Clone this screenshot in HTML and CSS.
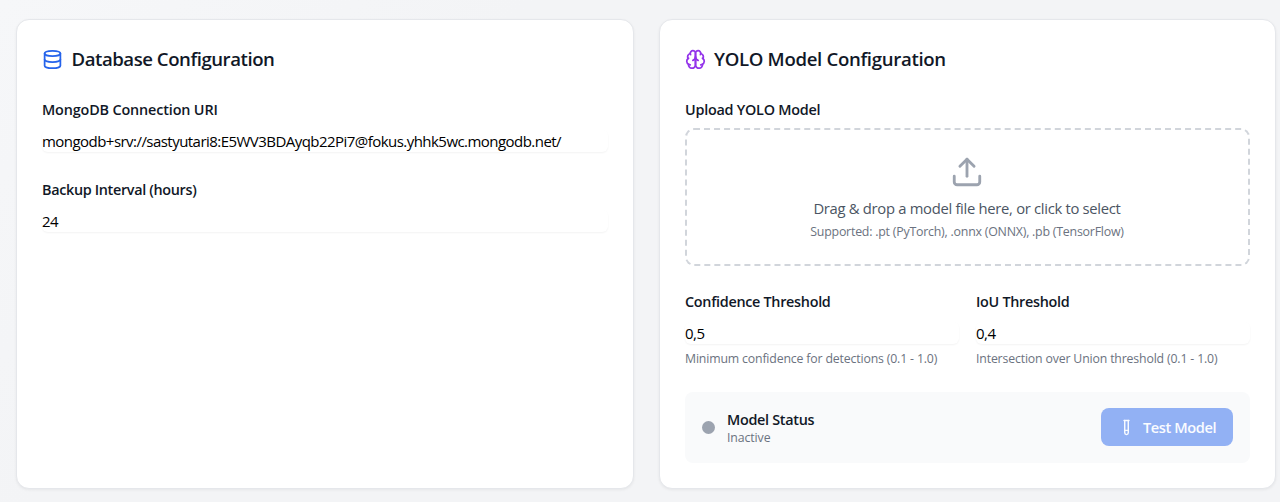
FILE: index.html
```html
<!DOCTYPE html>
<html lang="en">
<head>
<meta charset="utf-8">
<title>Configuration</title>
<link rel="stylesheet" href="styles.css">
</head>
<body>
<main class="panels">
  <section class="card">
    <h2 class="card-title">
      <svg class="icon-title icon-db" viewBox="0 0 24 24"><ellipse cx="12" cy="5" rx="9" ry="3"/><path d="M3 5v14a9 3 0 0 0 18 0V5"/><path d="M3 12a9 3 0 0 0 18 0"/></svg>
      <span class="t-db">Database Configuration</span>
    </h2>
    <div class="field">
      <label class="label"><span class="l-uri">MongoDB Connection URI</span></label>
      <div class="input"><span class="v-uri">mongodb+srv://sastyutari8:E5WV3BDAyqb22Pi7@fokus.yhhk5wc.mongodb.net/</span></div>
    </div>
    <div class="field field-next">
      <label class="label"><span class="l-backup">Backup Interval (hours)</span></label>
      <div class="input"><span class="v-num">24</span></div>
    </div>
  </section>
  <section class="card">
    <h2 class="card-title">
      <svg class="icon-title icon-brain" viewBox="0 0 24 24"><path d="M12 5a3 3 0 1 0-5.997.125 4 4 0 0 0-2.526 5.77 4 4 0 0 0 .556 6.588A4 4 0 1 0 12 18Z"/><path d="M12 5a3 3 0 1 1 5.997.125 4 4 0 0 1 2.526 5.77 4 4 0 0 1-.556 6.588A4 4 0 1 1 12 18Z"/><path d="M15 13a4.5 4.5 0 0 1-3-4 4.5 4.5 0 0 1-3 4"/><path d="M17.599 6.5a3 3 0 0 0 .399-1.375M6.003 5.125A3 3 0 0 0 6.401 6.5M3.477 10.896a4 4 0 0 1 .585-.396M19.938 10.5a4 4 0 0 1 .585.396M6 18a4 4 0 0 1-1.967-.516M19.967 17.484A4 4 0 0 1 18 18"/></svg>
      <span class="t-yolo">YOLO Model Configuration</span>
    </h2>
    <label class="label"><span class="l-upload">Upload YOLO Model</span></label>
    <div class="dropzone">
      <svg class="icon-upload" viewBox="0 0 24 24"><path d="M21 15v4a2 2 0 0 1-2 2H5a2 2 0 0 1-2-2v-4"/><path d="m17 8-5-5-5 5"/><path d="M12 3v12"/></svg>
      <p class="drop-main">Drag &amp; drop a model file here, or click to select</p>
      <p class="drop-sub">Supported: .pt (PyTorch), .onnx (ONNX), .pb (TensorFlow)</p>
    </div>
    <div class="thresholds">
      <div>
        <label class="label"><span class="l-conf">Confidence Threshold</span></label>
        <div class="input"><span class="v-num">0,5</span></div>
        <p class="hint">Minimum confidence for detections (0.1 - 1.0)</p>
      </div>
      <div>
        <label class="label"><span class="l-iou">IoU Threshold</span></label>
        <div class="input"><span class="v-num">0,4</span></div>
        <p class="hint">Intersection over Union threshold (0.1 - 1.0)</p>
      </div>
    </div>
    <div class="status">
      <span class="dot"></span>
      <div class="status-text">
        <p class="status-name">Model Status</p>
        <p class="status-value">Inactive</p>
      </div>
      <button class="button" disabled>
        <svg class="icon-tube" viewBox="0 0 24 24"><path d="M14.5 2v17.5a2.5 2.5 0 0 1-5 0V2"/><path d="M8.5 2h7"/><path d="M9.5 16h5"/></svg>
        <span>Test Model</span>
      </button>
    </div>
  </section>
</main>
</body>
</html>
```
FILE: styles.css
```css
* { box-sizing: border-box; }
body {
  margin: 0;
  height: 502px;
  overflow: hidden;
  background: linear-gradient(135deg, #f6f7f9 0, #f3f4f6 30%, #f3f4f6 100%);
  font-family: "Open Sans", "Noto Sans", sans-serif;
  color: #111827;
}
h2, p { margin: 0; }
svg { display: block; fill: none; stroke: currentColor; stroke-width: 2; stroke-linecap: round; stroke-linejoin: round; flex: none; }
.panels {
  display: grid;
  grid-template-columns: 618px 617px;
  gap: 25px;
  height: 489px;
  padding: 19px 0 0 16px;
}
.card {
  height: 470px;
  padding: 24px 25px 0 25px;
  background: #fff;
  border: 1px solid #e5e7eb;
  border-radius: 13px;
  box-shadow: 0 1px 3px rgba(0, 0, 0, .06);
}
.card-title {
  display: flex;
  align-items: center;
  gap: 8.5px;
  height: 30px;
  margin-bottom: 25px;
  font-size: 18.6px;
  font-weight: 600;
  white-space: nowrap;
}
.icon-title { width: 21px; height: 21px; }
.icon-db { color: #2563eb; }
.icon-brain { color: #9333ea; }
.t-db, .t-yolo { padding-bottom: 1px; }
.t-db { letter-spacing: -.46px; }
.t-yolo { margin-left: -.5px; letter-spacing: -.32px; }
.label {
  display: block;
  height: 22px;
  line-height: 22px;
  font-size: 14.4px;
  font-weight: 600;
  white-space: nowrap;
}
.l-uri { letter-spacing: -.15px; }
.l-backup { letter-spacing: -.33px; }
.l-upload { letter-spacing: -.25px; }
.l-conf { letter-spacing: -.3px; }
.l-iou { letter-spacing: -.3px; }
.input {
  height: 22px;
  margin-top: 9px;
  line-height: 23px;
  font-size: 15px;
  color: #000;
  border-radius: 6px;
  box-shadow: 0 1px 2px rgba(0, 0, 0, .05);
  white-space: nowrap;
}
.v-uri { letter-spacing: -.54px; }
.v-num { letter-spacing: -.5px; }
.field-next { margin-top: 27px; }
.dropzone {
  display: flex;
  flex-direction: column;
  align-items: center;
  height: 138px;
  margin-top: 7px;
  padding: 25px 1px 0 0;
  border: 2px dashed #d1d5db;
  border-radius: 9px;
  white-space: nowrap;
}
.icon-upload { width: 34px; height: 34px; color: #9ca3af; }
.drop-main { margin-top: 7px; line-height: 24px; font-size: 14.8px; letter-spacing: -.3px; color: #4b5563; }
.drop-sub { margin-top: 1px; line-height: 21px; font-size: 12.4px; letter-spacing: -.23px; color: #6b7280; }
.thresholds {
  display: grid;
  grid-template-columns: 1fr 1fr;
  gap: 17px;
  margin-top: 25px;
}
.hint { margin-top: 5px; line-height: 20px; font-size: 12.3px; letter-spacing: -.16px; color: #6b7280; white-space: nowrap; }
.status {
  display: flex;
  align-items: center;
  height: 71px;
  margin-top: 23px;
  padding: 0 17px;
  background: #f9fafb;
  border-radius: 8px;
}
.dot { width: 13px; height: 13px; margin-right: 12px; border-radius: 50%; background: #9ca3af; }
.status-text { flex: 1; }
.status-name { line-height: 21px; font-size: 14.4px; letter-spacing: -.3px; font-weight: 600; }
.status-value { line-height: 16px; font-size: 12.3px; letter-spacing: -.1px; color: #6b7280; }
.button {
  display: flex;
  align-items: center;
  gap: 8px;
  width: 132px;
  height: 38px;
  margin-bottom: 1px;
  padding: 0 0 0 17px;
  border: 0;
  border-radius: 8px;
  background: #92b1f4;
  color: #fafcff;
  font: 600 14.6px "Open Sans", sans-serif;
  letter-spacing: -.4px;
  white-space: nowrap;
}
.icon-tube { width: 17px; height: 17px; }
```
